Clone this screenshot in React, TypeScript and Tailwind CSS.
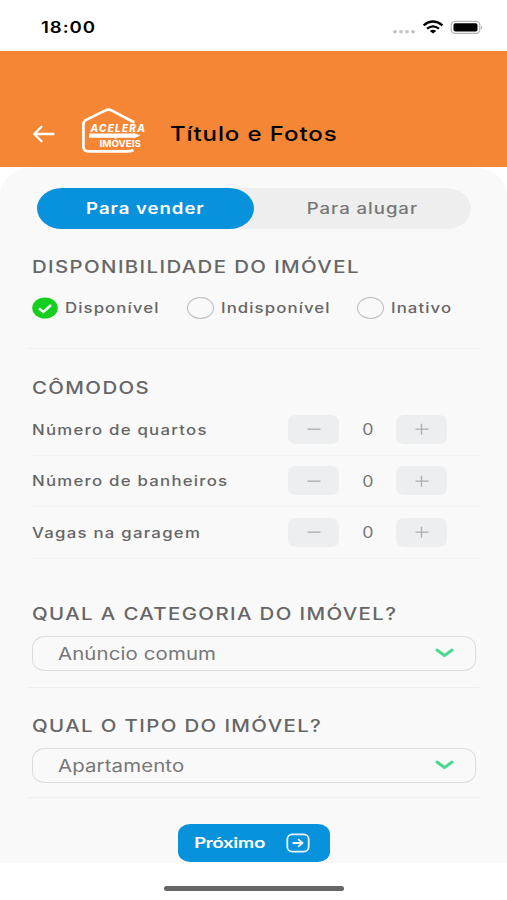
import { useState, type ReactNode } from "react";
import { clsx } from "clsx";

const STATUS = [
  { label: "Disponível", width: "w-[155px]" },
  { label: "Indisponível", width: "w-[170px]" },
  { label: "Inativo", width: "w-[110px]" },
];

const ROOMS = ["Número de quartos", "Número de banheiros", "Vagas na garagem"];

// Wide lettering used all over the app
function Wide({ className, children }: { className?: string; children: ReactNode }) {
  return (
    <span className={clsx("inline-block origin-left scale-x-[1.2] whitespace-nowrap", className)}>
      {children}
    </span>
  );
}

function StatusBar() {
  return (
    <div className="flex h-[51px] items-center bg-white pt-1 pl-[41px]">
      <Wide className="w-[351px] text-[15.5px] font-semibold tracking-[0.8px] text-black">18:00</Wide>
      <svg width="92" height="20" viewBox="0 0 92 20">
        <g fill="#c4c4c6">
          <ellipse cx="3" cy="13.7" rx="2" ry="1.7" />
          <ellipse cx="9" cy="13.7" rx="2" ry="1.7" />
          <ellipse cx="15" cy="13.7" rx="2" ry="1.7" />
          <ellipse cx="21" cy="13.7" rx="2" ry="1.7" />
        </g>
        <g fill="none" stroke="#000" strokeWidth="2.3">
          <path d="M31.6 7.3Q41 -0.2 50.4 7.3" />
          <path d="M35 10.6Q41 6.1 47 10.6" />
        </g>
        <path d="M37.8 13Q41 10.6 44.2 13L41 15.6Z" fill="#000" />
        <rect x="59.2" y="3.4" width="28.6" height="12" rx="3.6" fill="none" stroke="#b5b5b5" strokeWidth="1.2" />
        <rect x="61.5" y="5.2" width="24" height="8.4" rx="1.8" fill="#000" />
        <path d="M89.2 7.4q2 2 0 4z" fill="#a3a3a3" />
      </svg>
    </div>
  );
}

function Logo() {
  return (
    <svg width="68" height="48" viewBox="0 0 68 48" className="mb-[2px] ml-[26px]">
      <path
        d="M53.5 14.5L31 2.6Q27.4 0.8 24 2.6L5.6 11.6Q2.4 13.2 2.4 16.4V38.5Q2.4 43.4 7.6 43.4H46Q50 43.4 52.4 42"
        fill="none"
        stroke="#fff"
        strokeWidth="2.7"
      />
      <path d="M8 25.6H52L58.5 27.6L52 29.7H8Z" fill="#fff" />
      <path d="M52 25.2L58 27.6L52 30.1" fill="none" stroke="#fff" strokeWidth="1.1" />
      <text x="9.6" y="23.8" textLength="55.5" lengthAdjust="spacingAndGlyphs" fontSize="9.8" fontWeight="800" fontStyle="italic" letterSpacing="1.2" fill="#fff">
        ACELERA
      </text>
      <text x="18.5" y="39.3" textLength="41.5" lengthAdjust="spacingAndGlyphs" fontSize="9.4" fontWeight="700" fill="#fff">
        IMÓVEIS
      </text>
    </svg>
  );
}

function Header() {
  return (
    <header className="flex h-[116px] items-end bg-[#f48636] pb-[9px] pl-8">
      <svg width="23" height="18" viewBox="0 0 23 18" className="mb-[15px]" fill="none" stroke="#fff" strokeWidth="2.3" strokeLinecap="round" strokeLinejoin="round">
        <path d="M21.5 9H2.2M9.5 1.8L2.2 9L9.5 16.2" />
      </svg>
      <Logo />
      <h1 className="mb-3 ml-[21px] text-[20px] leading-6 font-medium tracking-[0.75px] text-black">
        <Wide>Título e Fotos</Wide>
      </h1>
    </header>
  );
}

function SectionTitle({ children }: { children: ReactNode }) {
  return (
    <h2 className="h-6 text-[17px] leading-6 font-medium tracking-[1.15px] text-[#666]">
      <Wide>{children}</Wide>
    </h2>
  );
}

function Divider() {
  return <div className="-mx-1 h-px bg-[#f0f0f0]" />;
}

function Stepper({ value, onChange }: { value: number; onChange: (v: number) => void }) {
  const button = "flex h-[29px] w-[51px] items-center justify-center rounded-[8px/7px] bg-[#eceeef]";
  return (
    <div className="flex items-center">
      <button className={button} onClick={() => onChange(Math.max(0, value - 1))}>
        <svg width="14" height="12" viewBox="0 0 14 12" stroke="#b5b5b5" strokeWidth="1.5">
          <path d="M0.5 6.2H13.5" />
        </svg>
      </button>
      <span className="w-[57px] pt-px text-center text-[15.5px] text-[#777]">
        <span className="inline-block scale-x-[1.15]">{value}</span>
      </span>
      <button className={button} onClick={() => onChange(value + 1)}>
        <svg width="14" height="12" viewBox="0 0 14 12" stroke="#adadad" strokeWidth="1.3">
          <path d="M0.5 6.2H13.5M6.5 0.7V11.7" />
        </svg>
      </button>
    </div>
  );
}

function SelectField({ value }: { value: string }) {
  return (
    <button className="flex h-[35px] w-[444px] items-center justify-between rounded-[13px/11px] border border-[#dcdcdc] pr-[21px] pl-[25px] text-[17px] tracking-[0.1px] text-[#777]">
      <Wide className="pt-[3px]">{value}</Wide>
      <svg width="19" height="10" viewBox="0 0 19 10" fill="none" stroke="#48d98c" strokeWidth="3" strokeLinecap="round" strokeLinejoin="round">
        <path d="M2 2L9.5 7.6L17 2" />
      </svg>
    </button>
  );
}

export default function App() {
  const [tab, setTab] = useState(0);
  const [status, setStatus] = useState(0);
  const [rooms, setRooms] = useState([0, 0, 0]);

  return (
    <div className="h-[900px] w-[507px] overflow-hidden bg-white font-['Inter',sans-serif]">
      <StatusBar />
      <Header />

      <main className="h-[696px] rounded-t-[34px_28px] bg-[#f9f9f9] px-8 pt-[21px]">
        <div className="ml-[5px] flex h-[41px] w-[434px] rounded-[25px/20.5px] bg-[#eeeeee] text-[15.5px]">
          {["Para vender", "Para alugar"].map((label, i) => (
            <button
              key={label}
              onClick={() => setTab(i)}
              className={clsx(
                "flex w-[217px] items-center justify-center rounded-[25px/20.5px] tracking-[0.8px]",
                tab === i ? "bg-[#0892dc] font-semibold text-white" : "font-medium text-[#777]",
              )}
            >
              <span className="inline-block scale-x-[1.2]">{label}</span>
            </button>
          ))}
        </div>

        <div className="mt-[26px]">
          <SectionTitle>DISPONIBILIDADE DO IMÓVEL</SectionTitle>
        </div>

        <div className="mt-[18px] flex h-[22px]">
          {STATUS.map((s, i) => (
            <button key={s.label} onClick={() => setStatus(i)} className={clsx("flex shrink-0 items-center", s.width)}>
              {status === i ? (
                <svg width="26" height="22" viewBox="0 0 26 22">
                  <ellipse cx="13" cy="11" rx="12.8" ry="10.6" fill="#14cf1e" />
                  <path d="M7 11.5L11.4 15L19 8" fill="none" stroke="#fff" strokeWidth="2.4" />
                </svg>
              ) : (
                <span className="h-[22px] w-[27px] rounded-[50%] border border-[#bcbcbc]" />
              )}
              <Wide className="ml-[6.5px] pb-px text-[14px] font-medium tracking-[0.9px] text-[#666]">{s.label}</Wide>
            </button>
          ))}
        </div>

        <div className="mt-[29px]">
          <Divider />
        </div>

        <div className="mt-[27px]">
          <SectionTitle>CÔMODOS</SectionTitle>
        </div>
        <div className="mt-1">
          {ROOMS.map((room, i) => (
            <div key={room} className="flex h-[51.5px] w-[447px] items-center justify-between border-b border-[#f3f3f3] pr-8">
              <Wide className="text-[14px] font-medium tracking-[1.03px] text-[#666]">{room}</Wide>
              <Stepper value={rooms[i]} onChange={(v) => setRooms(rooms.map((r, j) => (j === i ? v : r)))} />
            </div>
          ))}
        </div>

        <div className="mt-[43px]">
          <SectionTitle>QUAL A CATEGORIA DO IMÓVEL?</SectionTitle>
        </div>
        <div className="mt-[10px] mb-4">
          <SelectField value="Anúncio comum" />
        </div>
        <Divider />

        <div className="mt-[26px]">
          <SectionTitle>QUAL O TIPO DO IMÓVEL?</SectionTitle>
        </div>
        <div className="mt-[10px] mb-[14px]">
          <SelectField value="Apartamento" />
        </div>
        <Divider />

        <button className="mt-[26px] ml-[146px] flex h-[38px] w-[152px] items-center justify-between rounded-[12px/10px] bg-[#0892dc] pr-[20px] pl-[16px] font-['Lato','Inter',sans-serif] text-[16px] font-bold text-white">
          <Wide className="pb-px">Próximo</Wide>
          <svg width="24" height="20" viewBox="0 0 24 20" fill="none" stroke="#e9f6fd" strokeWidth="1.8" strokeLinecap="round" strokeLinejoin="round">
            <rect x="1.3" y="1.3" width="21.4" height="17.4" rx="5" />
            <path d="M7.2 10H16.4M12.6 6.6L16.6 10L12.6 13.4" />
          </svg>
        </button>
      </main>

      <div className="mt-[23px] ml-[164px] h-[5px] w-[180px] rounded-full bg-[#666]" />
    </div>
  );
}
